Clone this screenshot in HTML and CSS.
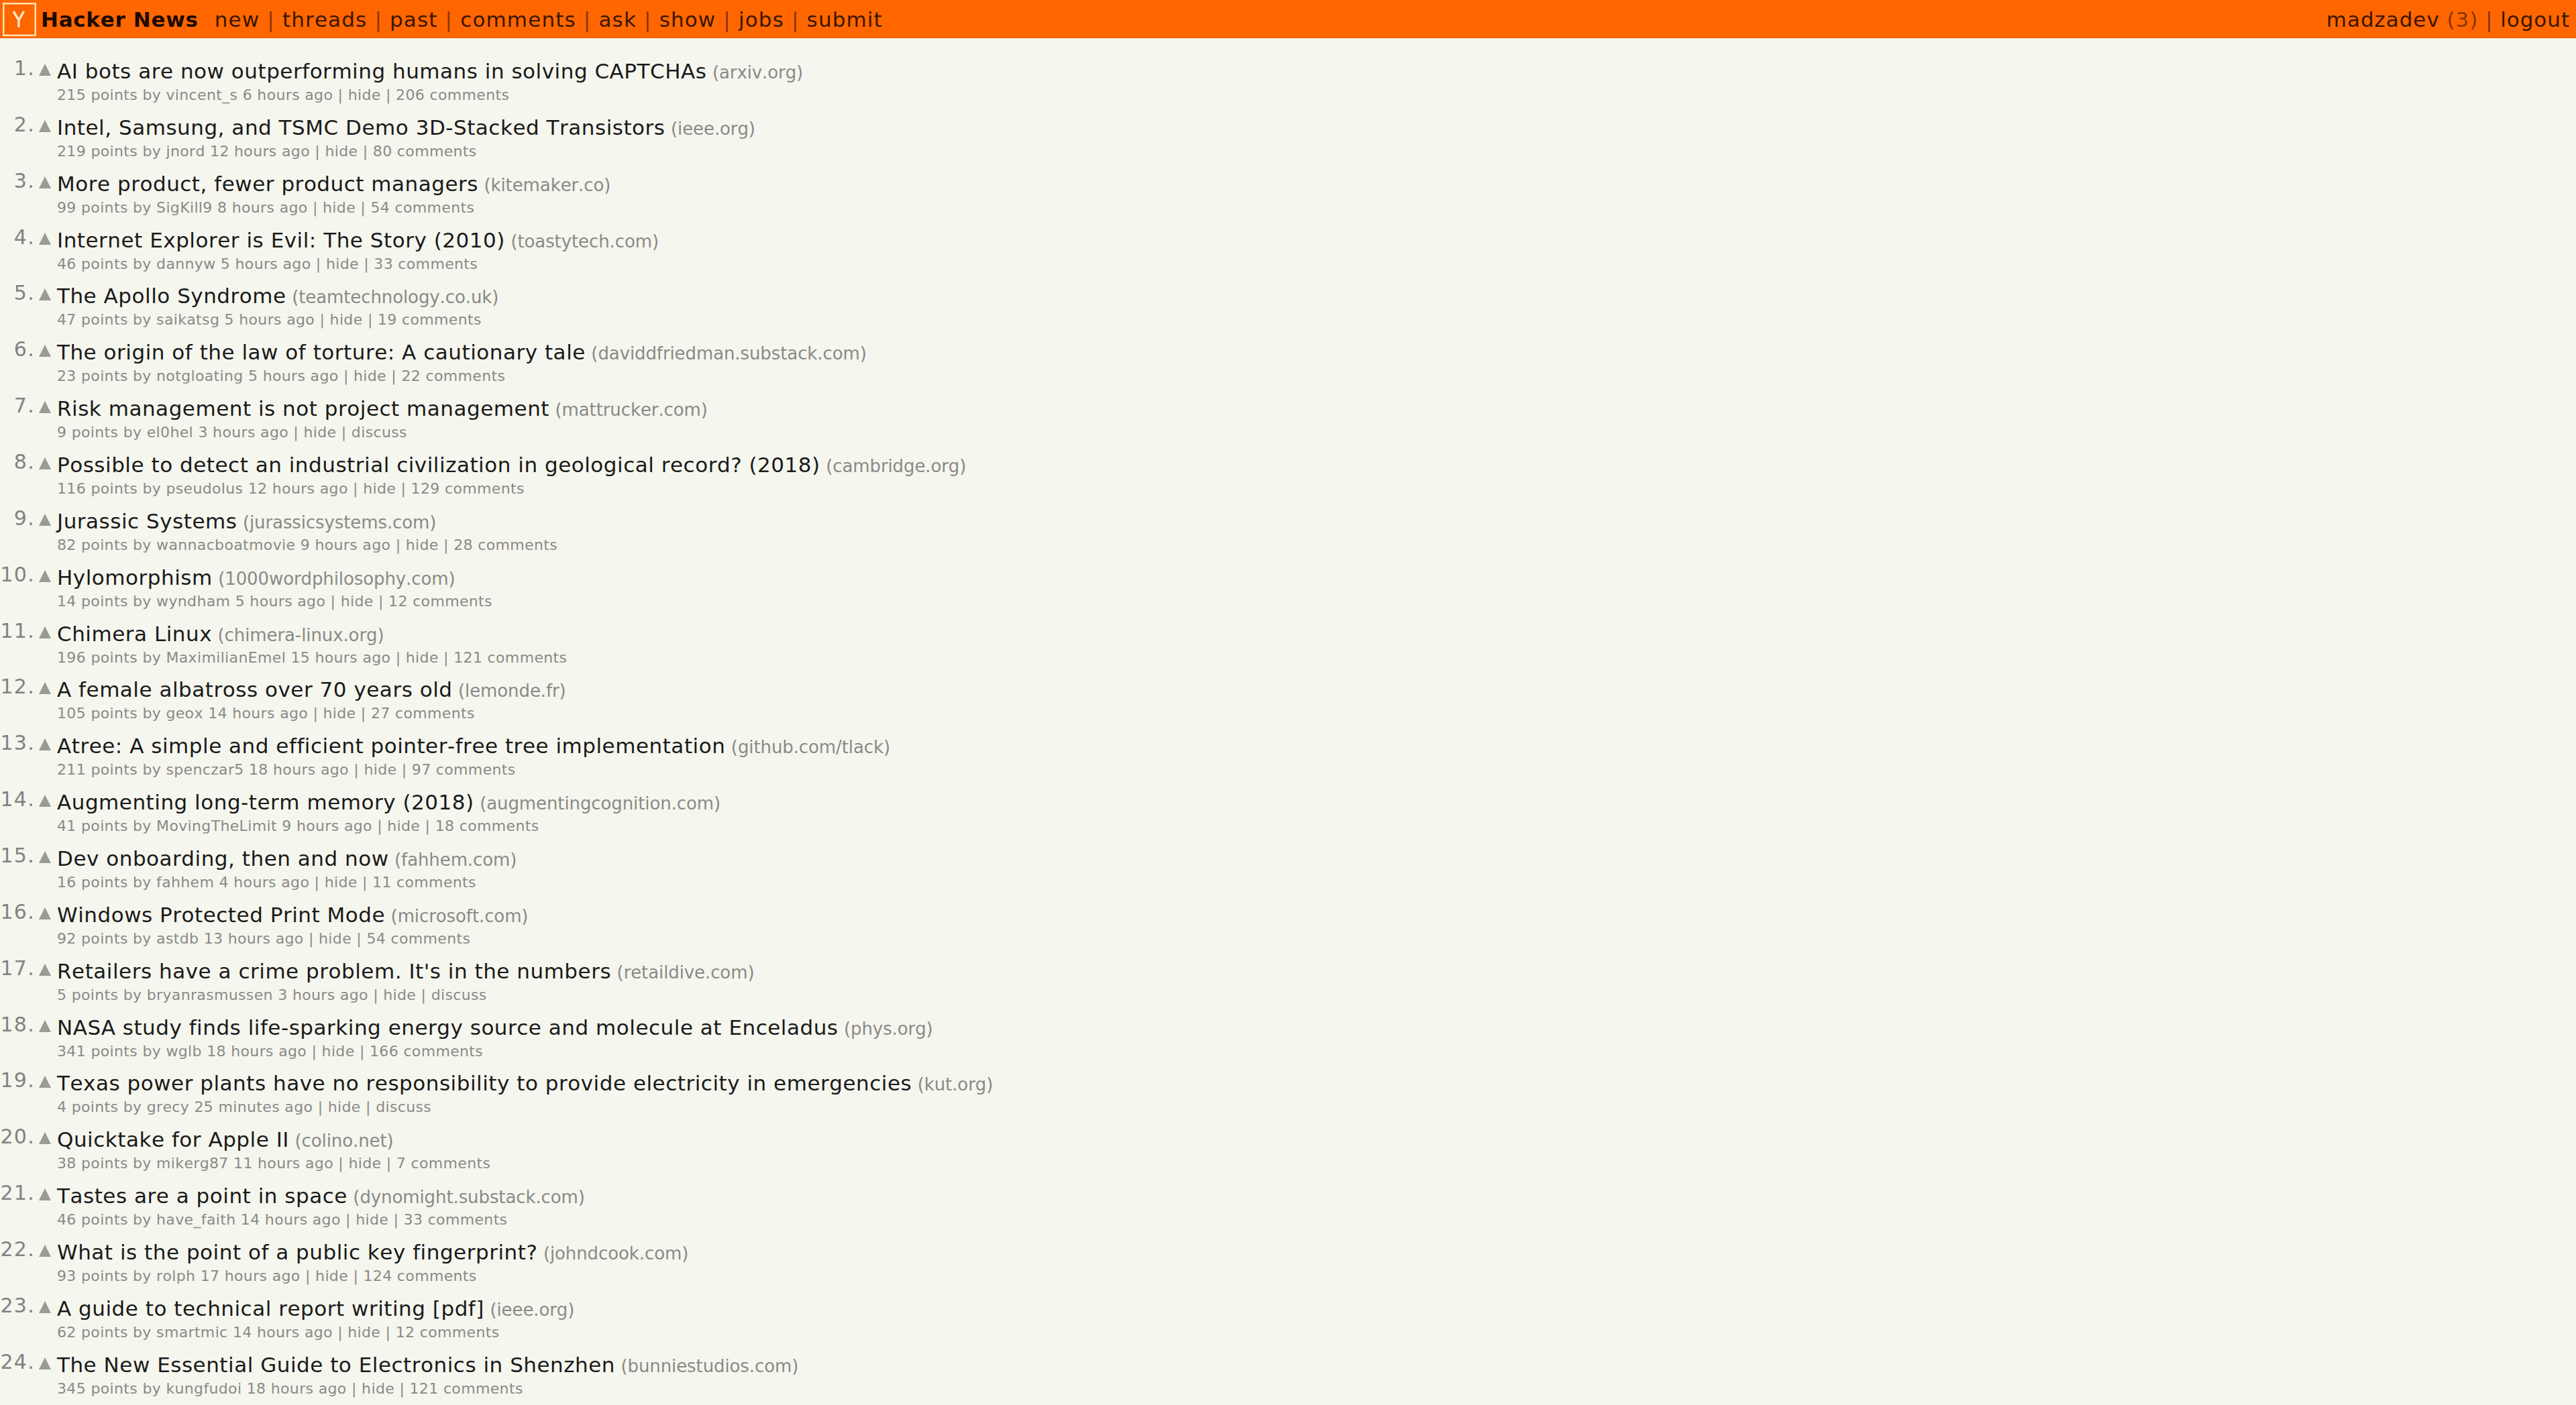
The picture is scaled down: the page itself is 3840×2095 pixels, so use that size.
FILE: index.html
```html
<!DOCTYPE html>
<html lang="en">
<head>
    <meta charset="UTF-8">
    <title>Hacker News</title>
    <link rel="stylesheet" href="styles.css">
</head>
<body>
    <!-- Top bar -->
    <header class="topbar">
        <svg class="logo" viewBox="0 0 50 50">
            <rect x="1.25" y="1.25" width="47.5" height="47.5" fill="none" stroke="#ffe2b0" stroke-width="2.5"/>
            <path d="M16 13 L24 26 L31.5 13 M24 25 V36.5" fill="none" stroke="#ffe8c8" stroke-width="3.4"/>
        </svg>
        <nav class="menu">
            <b class="brand">Hacker News</b>
            <a>new</a> | <a>threads</a> | <a>past</a> | <a>comments</a> | <a>ask</a> | <a>show</a> | <a>jobs</a> | <a>submit</a>
        </nav>
        <div class="user"><a>madzadev</a> (3) | <a>logout</a></div>
    </header>

    <!-- Stories -->
    <main id="stories" class="stories"></main>

    <script>
        // title, site, points, user, age, comments
        const stories = [
            ['AI bots are now outperforming humans in solving CAPTCHAs', 'arxiv.org', 215, 'vincent_s', '6 hours', 206],
            ['Intel, Samsung, and TSMC Demo 3D-Stacked Transistors', 'ieee.org', 219, 'jnord', '12 hours', 80],
            ['More product, fewer product managers', 'kitemaker.co', 99, 'SigKill9', '8 hours', 54],
            ['Internet Explorer is Evil: The Story (2010)', 'toastytech.com', 46, 'dannyw', '5 hours', 33],
            ['The Apollo Syndrome', 'teamtechnology.co.uk', 47, 'saikatsg', '5 hours', 19],
            ['The origin of the law of torture: A cautionary tale', 'daviddfriedman.substack.com', 23, 'notgloating', '5 hours', 22],
            ['Risk management is not project management', 'mattrucker.com', 9, 'el0hel', '3 hours', 0],
            ['Possible to detect an industrial civilization in geological record? (2018)', 'cambridge.org', 116, 'pseudolus', '12 hours', 129],
            ['Jurassic Systems', 'jurassicsystems.com', 82, 'wannacboatmovie', '9 hours', 28],
            ['Hylomorphism', '1000wordphilosophy.com', 14, 'wyndham', '5 hours', 12],
            ['Chimera Linux', 'chimera-linux.org', 196, 'MaximilianEmel', '15 hours', 121],
            ['A female albatross over 70 years old', 'lemonde.fr', 105, 'geox', '14 hours', 27],
            ['Atree: A simple and efficient pointer-free tree implementation', 'github.com/tlack', 211, 'spenczar5', '18 hours', 97],
            ['Augmenting long-term memory (2018)', 'augmentingcognition.com', 41, 'MovingTheLimit', '9 hours', 18],
            ['Dev onboarding, then and now', 'fahhem.com', 16, 'fahhem', '4 hours', 11],
            ['Windows Protected Print Mode', 'microsoft.com', 92, 'astdb', '13 hours', 54],
            ["Retailers have a crime problem. It's in the numbers", 'retaildive.com', 5, 'bryanrasmussen', '3 hours', 0],
            ['NASA study finds life-sparking energy source and molecule at Enceladus', 'phys.org', 341, 'wglb', '18 hours', 166],
            ['Texas power plants have no responsibility to provide electricity in emergencies', 'kut.org', 4, 'grecy', '25 minutes', 0],
            ['Quicktake for Apple II', 'colino.net', 38, 'mikerg87', '11 hours', 7],
            ['Tastes are a point in space', 'dynomight.substack.com', 46, 'have_faith', '14 hours', 33],
            ['What is the point of a public key fingerprint?', 'johndcook.com', 93, 'rolph', '17 hours', 124],
            ['A guide to technical report writing [pdf]', 'ieee.org', 62, 'smartmic', '14 hours', 12],
            ['The New Essential Guide to Electronics in Shenzhen', 'bunniestudios.com', 345, 'kungfudoi', '18 hours', 121]
        ];

        const list = document.getElementById('stories');
        stories.forEach(([title, site, points, user, age, comments], index) => {
            const row = document.createElement('article');
            row.className = 'story';
            row.innerHTML = `
                <span class="rank">${index + 1}.</span>
                <svg class="vote" viewBox="0 0 18 18"><path d="M9 0 L18 18 H0 Z" fill="#999b94"/></svg>
                <div class="body">
                    <div class="title"><a>${title}</a><span class="site">(${site})</span></div>
                    <div class="subtext">${points} points by ${user} ${age} ago | hide | ${comments ? comments + ' comments' : 'discuss'}</div>
                </div>
            `;
            list.appendChild(row);
        });
    </script>
</body>
</html>
```

FILE: styles.css
```css
body {
    margin: 0;
    height: 2095px;
    overflow: hidden;
    background-color: #f5f6ee;
    font-family: Verdana, "DejaVu Sans", sans-serif;
    font-kerning: none;
    color: #828282;
}
.topbar {
    display: flex;
    height: 57px;
    background-color: #ff6600;
    color: #8a3500;
    font-size: 31px;
    line-height: 59px;
    letter-spacing: 1.15px;
    white-space: nowrap;
}
.topbar a {
    color: #3a1600;
}
.logo {
    width: 50px;
    height: 50px;
    margin: 4px 7px 0 4px;
}
.brand {
    margin-right: 13px;
    color: #1c0a00;
    letter-spacing: 0.7px;
}
.user {
    margin-left: auto;
    padding-right: 9px;
    letter-spacing: 0.95px;
}
.stories {
    padding-top: 26px;
}
.story {
    display: flex;
    height: 83.86px;
    white-space: nowrap;
}
.rank {
    width: 52px;
    display: flex;
    justify-content: flex-end;
    font-size: 30px;
    line-height: 36px;
    letter-spacing: 1.3px;
    padding-top: 1px;
}
.vote {
    width: 18px;
    height: 18px;
    margin: 12px 9px 0 6px;
}
.title {
    font-size: 31px;
    line-height: 42px;
    letter-spacing: 0.52px;
    padding-top: 2px;
    color: #1a1a1a;
}
.site {
    margin-left: 8.5px;
    font-size: 26px;
    letter-spacing: -0.1px;
    color: #8a8a86;
}
.subtext {
    font-size: 22px;
    line-height: 26px;
    letter-spacing: 0.35px;
    color: #8a8a86;
}
```
